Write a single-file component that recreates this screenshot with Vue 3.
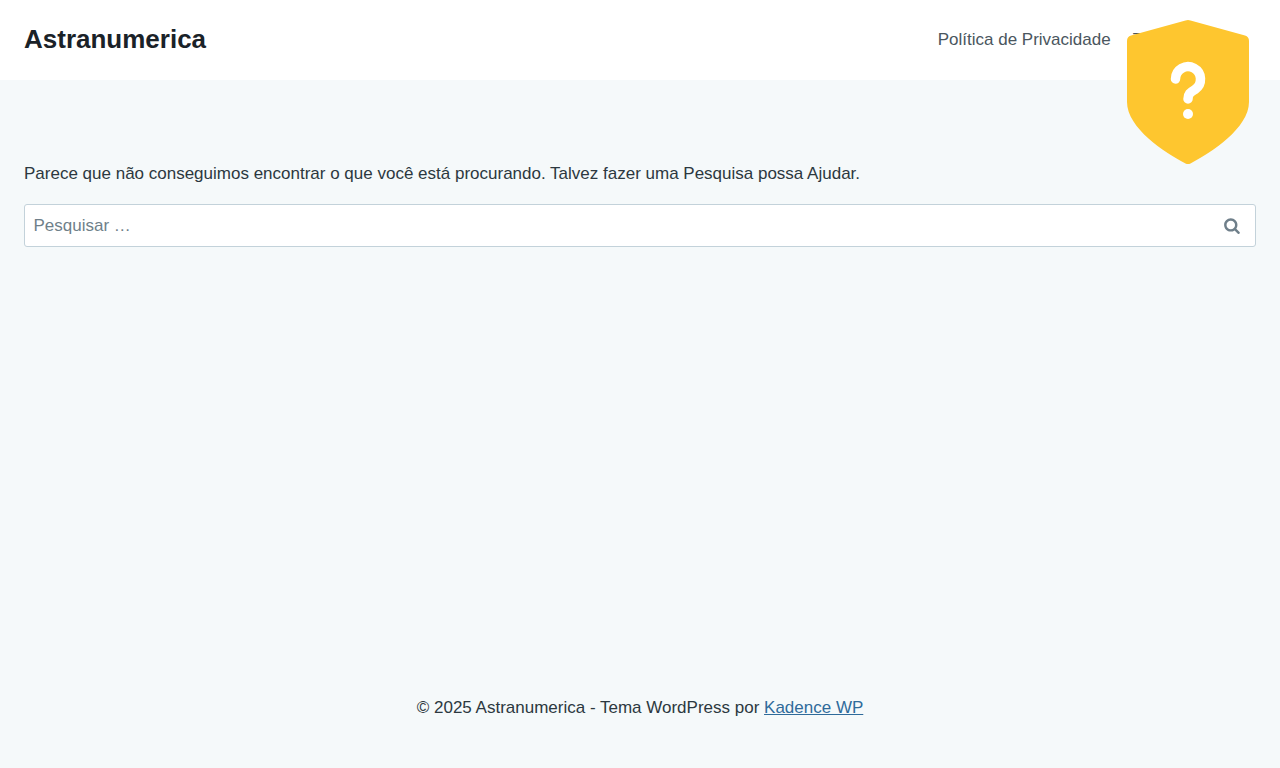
<script setup>
const navItems = ['Política de Privacidade', 'Termos de Uso']
</script>

<template>
  <div class="site">
    <header class="header">
      <a class="brand">Astranumerica</a>
      <nav class="nav">
        <a v-for="item in navItems" :key="item" class="nav-link">{{ item }}</a>
      </nav>
    </header>
    <main class="main">
      <p class="message">Parece que não conseguimos encontrar o que você está procurando. Talvez fazer uma Pesquisa possa Ajudar.</p>
      <form class="search" @submit.prevent>
        <input class="search-input" type="search" placeholder="Pesquisar …" />
        <svg class="search-icon" viewBox="0 0 26 28" width="16" height="17" aria-hidden="true">
          <path fill="currentColor" d="M18 13c0-3.859-3.141-7-7-7s-7 3.141-7 7 3.141 7 7 7 7-3.141 7-7zM26 26c0 1.094-.906 2-2 2-.531 0-1.047-.219-1.406-.594l-5.359-5.344c-1.828 1.266-4.016 1.937-6.234 1.937-6.078 0-11-4.922-11-11s4.922-11 11-11 11 4.922 11 11c0 2.219-.672 4.406-1.937 6.234l5.359 5.359c.359.359.578.875.578 1.406z"/>
        </svg>
      </form>
    </main>
    <footer class="footer">
      © 2025 Astranumerica - Tema WordPress por <a class="footer-link">Kadence WP</a>
    </footer>
    <svg class="shield" viewBox="0 0 122 144" width="122" height="144" aria-hidden="true">
      <path fill="#fec62f" d="M58.5 .4 a9 9 0 0 1 5 0 L118 15.5 Q122 16.8 122 21 V82 C122 108 84 133 63.5 143.4 a6 6 0 0 1 -5 0 C38 133 0 108 0 82 V21 Q0 16.8 4 15.5 Z"/>
      <path fill="none" stroke="#fff" stroke-width="9.5" stroke-linecap="round" stroke-linejoin="round" d="M48.5 59 A12.5 12.5 0 1 1 68 69.5 C63 72.5 61 74 61 79"/>
      <circle cx="61" cy="94" r="5" fill="#fff"/>
    </svg>
  </div>
</template>

<style>
html, body { margin: 0; background: #f5f9fa; }
</style>

<style scoped>
.site {
  position: relative;
  display: flex;
  flex-direction: column;
  min-height: 768px;
  background: #f5f9fa;
  color: #2c3840;
  font-family: "Liberation Sans", Arial, sans-serif;
  font-size: 17px;
  line-height: 1.6;
}
.header {
  display: flex;
  align-items: center;
  justify-content: space-between;
  height: 80px;
  padding: 0 24px;
  background: #fff;
  box-sizing: border-box;
}
.brand {
  color: #1a2228;
  font-size: 26px;
  font-weight: 700;
  line-height: 1.2;
}
.nav {
  display: flex;
  gap: 22px;
  padding-right: 9px;
}
.nav-link {
  color: #4a565e;
}
.main {
  flex: 1;
  padding: 80px 24px 0;
}
.message {
  margin: 0 0 17px;
}
.search {
  position: relative;
  display: flex;
  align-items: center;
}
.search-input {
  flex: 1;
  height: 43px;
  box-sizing: border-box;
  padding: 0 9px 0 8.5px;
  border: 1px solid #c3d2da;
  border-radius: 3px;
  background: #fff;
  color: #4a565e;
  font: 17px "Liberation Sans", Arial, sans-serif;
  outline: none;
  appearance: none;
}
.search-input::placeholder {
  color: #6f7f8a;
  opacity: 1;
}
.search-icon {
  position: absolute;
  right: 16px;
  top: 13px;
  color: #6f7f8a;
}
.footer {
  padding: 0 24px 47px;
  text-align: center;
}
.footer-link {
  color: #2f6b9a;
  text-decoration: underline;
}
.shield {
  position: absolute;
  left: 1127px;
  top: 20px;
}
</style>
